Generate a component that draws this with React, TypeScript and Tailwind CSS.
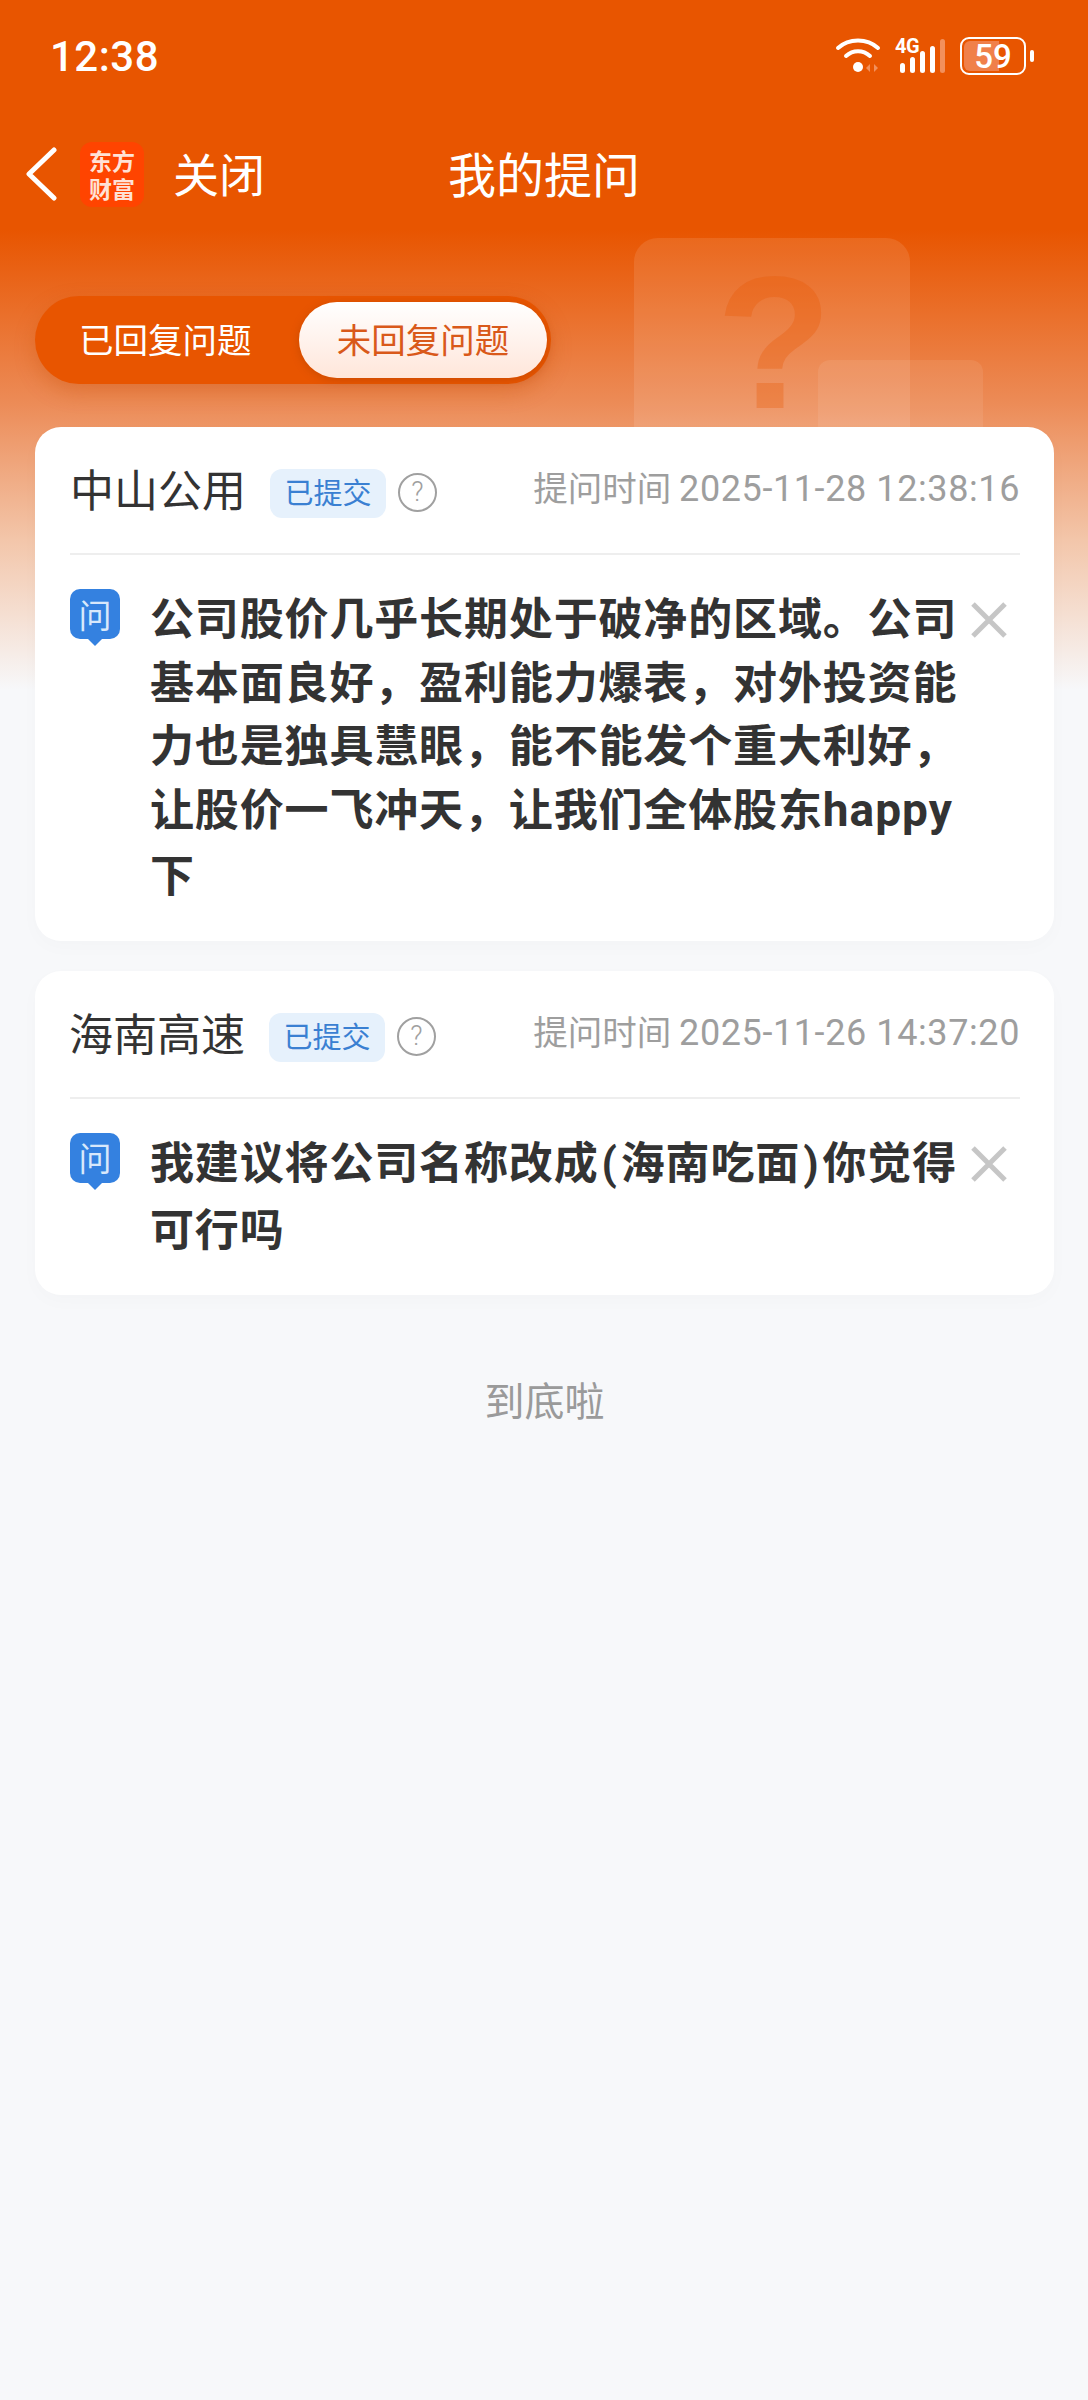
const cjk = "font-['Noto_Sans_CJK_SC','Noto_Sans',sans-serif]";

function StatusBar() {
  return (
    <div className="flex h-[139px] items-start justify-between pl-[50px] pr-[54px] pt-[36px]">
      <span className="font-['Roboto',sans-serif] text-[42px] font-medium leading-[42px] tracking-[0.5px] text-white">12:38</span>
      <div className="flex items-start pt-[1px]">
        <svg width="46" height="36" viewBox="0 0 46 36" fill="none">
          <path d="M3 11C14 1 32 1 43 11" stroke="#fff" strokeWidth="4" strokeLinecap="round" />
          <path d="M11 19C18 12.500 28 12.500 35 19" stroke="#fff" strokeWidth="4" strokeLinecap="round" />
          <circle cx="23" cy="30" r="5" fill="#fff" />
          <path d="M35 27v8l-4-4zM39 27v8l4-4z" fill="#f2905c" />
        </svg>
        <div className="relative ml-[14px] h-[36px] w-[50px]">
          <span className="absolute -top-[1px] left-0 font-['Roboto',sans-serif] text-[20px] font-bold leading-[20px] tracking-[-0.5px] text-white">4G</span>
          <div className="absolute bottom-0 right-0 flex items-end gap-[5px]">
            <div className="h-[10px] w-[5px] rounded-full bg-white" />
            <div className="h-[16px] w-[5px] rounded-full bg-white" />
            <div className="h-[22px] w-[5px] rounded-full bg-white" />
            <div className="h-[27px] w-[5px] rounded-full bg-white" />
            <div className="h-[34px] w-[5px] rounded-full bg-[#f2905c]" />
          </div>
        </div>
        <div className="ml-[15px] flex items-center gap-[4px]">
          <div className="relative flex h-[38px] w-[66px] items-center justify-center overflow-hidden rounded-[9px] border-2 border-white">
            <div className="absolute inset-y-[2px] left-[2px] w-[35px] rounded-l-[6px] bg-[#f0804a]" />
            <span className="relative font-['Roboto',sans-serif] text-[33px] font-medium leading-none text-white">59</span>
          </div>
          <div className="h-[12px] w-[4px] rounded-full bg-white" />
        </div>
      </div>
    </div>
  );
}

function NavBar() {
  return (
    <div className="relative flex h-[70px] items-center pl-[25px]">
      <svg width="32" height="54" viewBox="0 0 32 54" fill="none">
        <path d="M29 3L4 27L29 51" stroke="#fff" strokeWidth="5" strokeLinecap="round" strokeLinejoin="round" />
      </svg>
      <div className={`ml-[23px] flex h-[65px] w-[64px] flex-col items-center justify-center rounded-[12px] bg-[#ff4400] text-[23px] font-bold leading-[28px] text-[#ffe2d6] ${cjk}`}>
        <span>东方</span>
        <span>财富</span>
      </div>
      <span className={`ml-[29px] pb-[5px] text-[46px] leading-none text-white ${cjk}`}>关闭</span>
      <span className={`absolute left-0 right-0 pb-[5px] text-center text-[48px] leading-none text-white ${cjk}`}>我的提问</span>
    </div>
  );
}

function Tabs() {
  return (
    <div className={`flex h-[88px] w-[516px] items-center justify-between rounded-full bg-[#e85500] pr-[4px] shadow-[0_8px_20px_rgba(200,80,10,0.35)] ${cjk}`}>
      <span className="pb-[4px] pl-[44px] text-[34.500px] leading-none text-white">已回复问题</span>
      <div className="flex h-[76px] w-[248px] items-center justify-center rounded-full bg-gradient-to-b from-white to-[#ffe6da] pb-[4px] text-[34.500px] leading-none text-[#d9591a] shadow-[0_2px_8px_rgba(160,60,0,0.4)]">
        未回复问题
      </div>
    </div>
  );
}

type QuestionProps = {
  company: string;
  time: string;
  children: React.ReactNode;
  titleLeft: string;
};

function QuestionCard({ company, time, children, titleLeft }: QuestionProps) {
  return (
    <div className={`rounded-[26px] bg-white pb-[35px] pl-[35px] pr-[34px] shadow-[0_6px_20px_rgba(0,0,0,0.02)] ${cjk}`}>
      <div className="flex h-[128px] items-center justify-between border-b-2 border-[#eeeeee] pb-[4px]">
        <div className={`flex items-center ${titleLeft}`}>
          <span className="w-[176px] text-[44px] leading-none text-[#333333]">{company}</span>
          <span className="ml-[24px] mt-[11px] flex h-[49px] w-[116px] items-center justify-center rounded-[12px] bg-[#e6f1fc] pb-[4px] text-[29px] leading-none text-[#3a80d2]">已提交</span>
          <span className="ml-[12px] mt-[9px] flex h-[39px] w-[39px] items-center justify-center rounded-full border-2 border-[#a0a0a0] font-['Roboto',sans-serif] text-[27px] font-light leading-none text-[#a0a0a0]">?</span>
        </div>
        <span className="text-[34.500px] leading-none text-[#9e9e9e]">
          提问时间 <span className="font-['Roboto',sans-serif] text-[36px] tracking-[0.6px]">{time}</span>
        </span>
      </div>
      <div className="flex items-start pt-[34px]">
        <div className="relative flex h-[50px] w-[50px] shrink-0 items-center justify-center rounded-[10px] bg-[#3481e0] text-[33px] leading-none text-[#d8e8fb]">
          问
          <div className="absolute -bottom-[7px] left-[17px] h-0 w-0 border-x-[8px] border-t-[8px] border-x-transparent border-t-[#3481e0]" />
        </div>
        <p className="-mt-[4px] ml-[30px] w-[808px] text-[44px] font-bold leading-[63.500px] tracking-[0.850px] text-[#333333]">{children}</p>
        <svg className="ml-[13px] mt-[13px] shrink-0" width="36" height="36" viewBox="0 0 36 36" fill="none">
          <path d="M2 2L34 34M34 2L2 34" stroke="#c6c6c6" strokeWidth="5" />
        </svg>
      </div>
    </div>
  );
}

export default function App() {
  return (
    <div className="relative h-[2400px] w-[1088px] overflow-hidden bg-[#f7f8fa]">
      <div className="absolute inset-x-0 top-0 h-[700px] bg-[linear-gradient(to_bottom,#e85500_0,#e85500_230px,#ec8a55_400px,#f3c6aa_540px,#f7f8fa_690px)]" />
      <div className="absolute left-[634px] top-[238px] h-[300px] w-[276px] rounded-[24px] bg-white/10">
        <span className="absolute left-[82px] top-[9px] font-['Liberation_Sans',sans-serif] text-[190px] font-bold leading-[190px] text-[#e85500]/30">?</span>
      </div>
      <div className="absolute left-[818px] top-[360px] h-[120px] w-[165px] rounded-[12px] bg-white/[0.08]" />
      <div className="relative">
        <StatusBar />
        <NavBar />
        <div className="pl-[35px] pr-[34px] pt-[87px]">
          <Tabs />
          <div className="mt-[43px] flex flex-col gap-[30px]">
            <QuestionCard company="中山公用" time="2025-11-28 12:38:16" titleLeft="">
              公司股价几乎长期处于破净的区域。公司基本面良好，盈利能力爆表，对外投资能力也是独具慧眼，能不能发个重大利好，让股价一飞冲天，让我们全体股东
              <span className="font-['Roboto',sans-serif] text-[46px] tracking-[1px]">happy</span>下
            </QuestionCard>
            <QuestionCard company="海南高速" time="2025-11-26 14:37:20" titleLeft="-ml-[1px]">
              我建议将公司名称改成<span className="px-[3px] font-['Roboto',sans-serif]">(</span>海南吃面<span className="px-[3px] font-['Roboto',sans-serif]">)</span>你觉得
              <br />
              可行吗
            </QuestionCard>
          </div>
          <div className={`mt-[84px] text-center text-[40px] leading-none text-[#9a9a9a] ${cjk}`}>到底啦</div>
        </div>
      </div>
    </div>
  );
}
